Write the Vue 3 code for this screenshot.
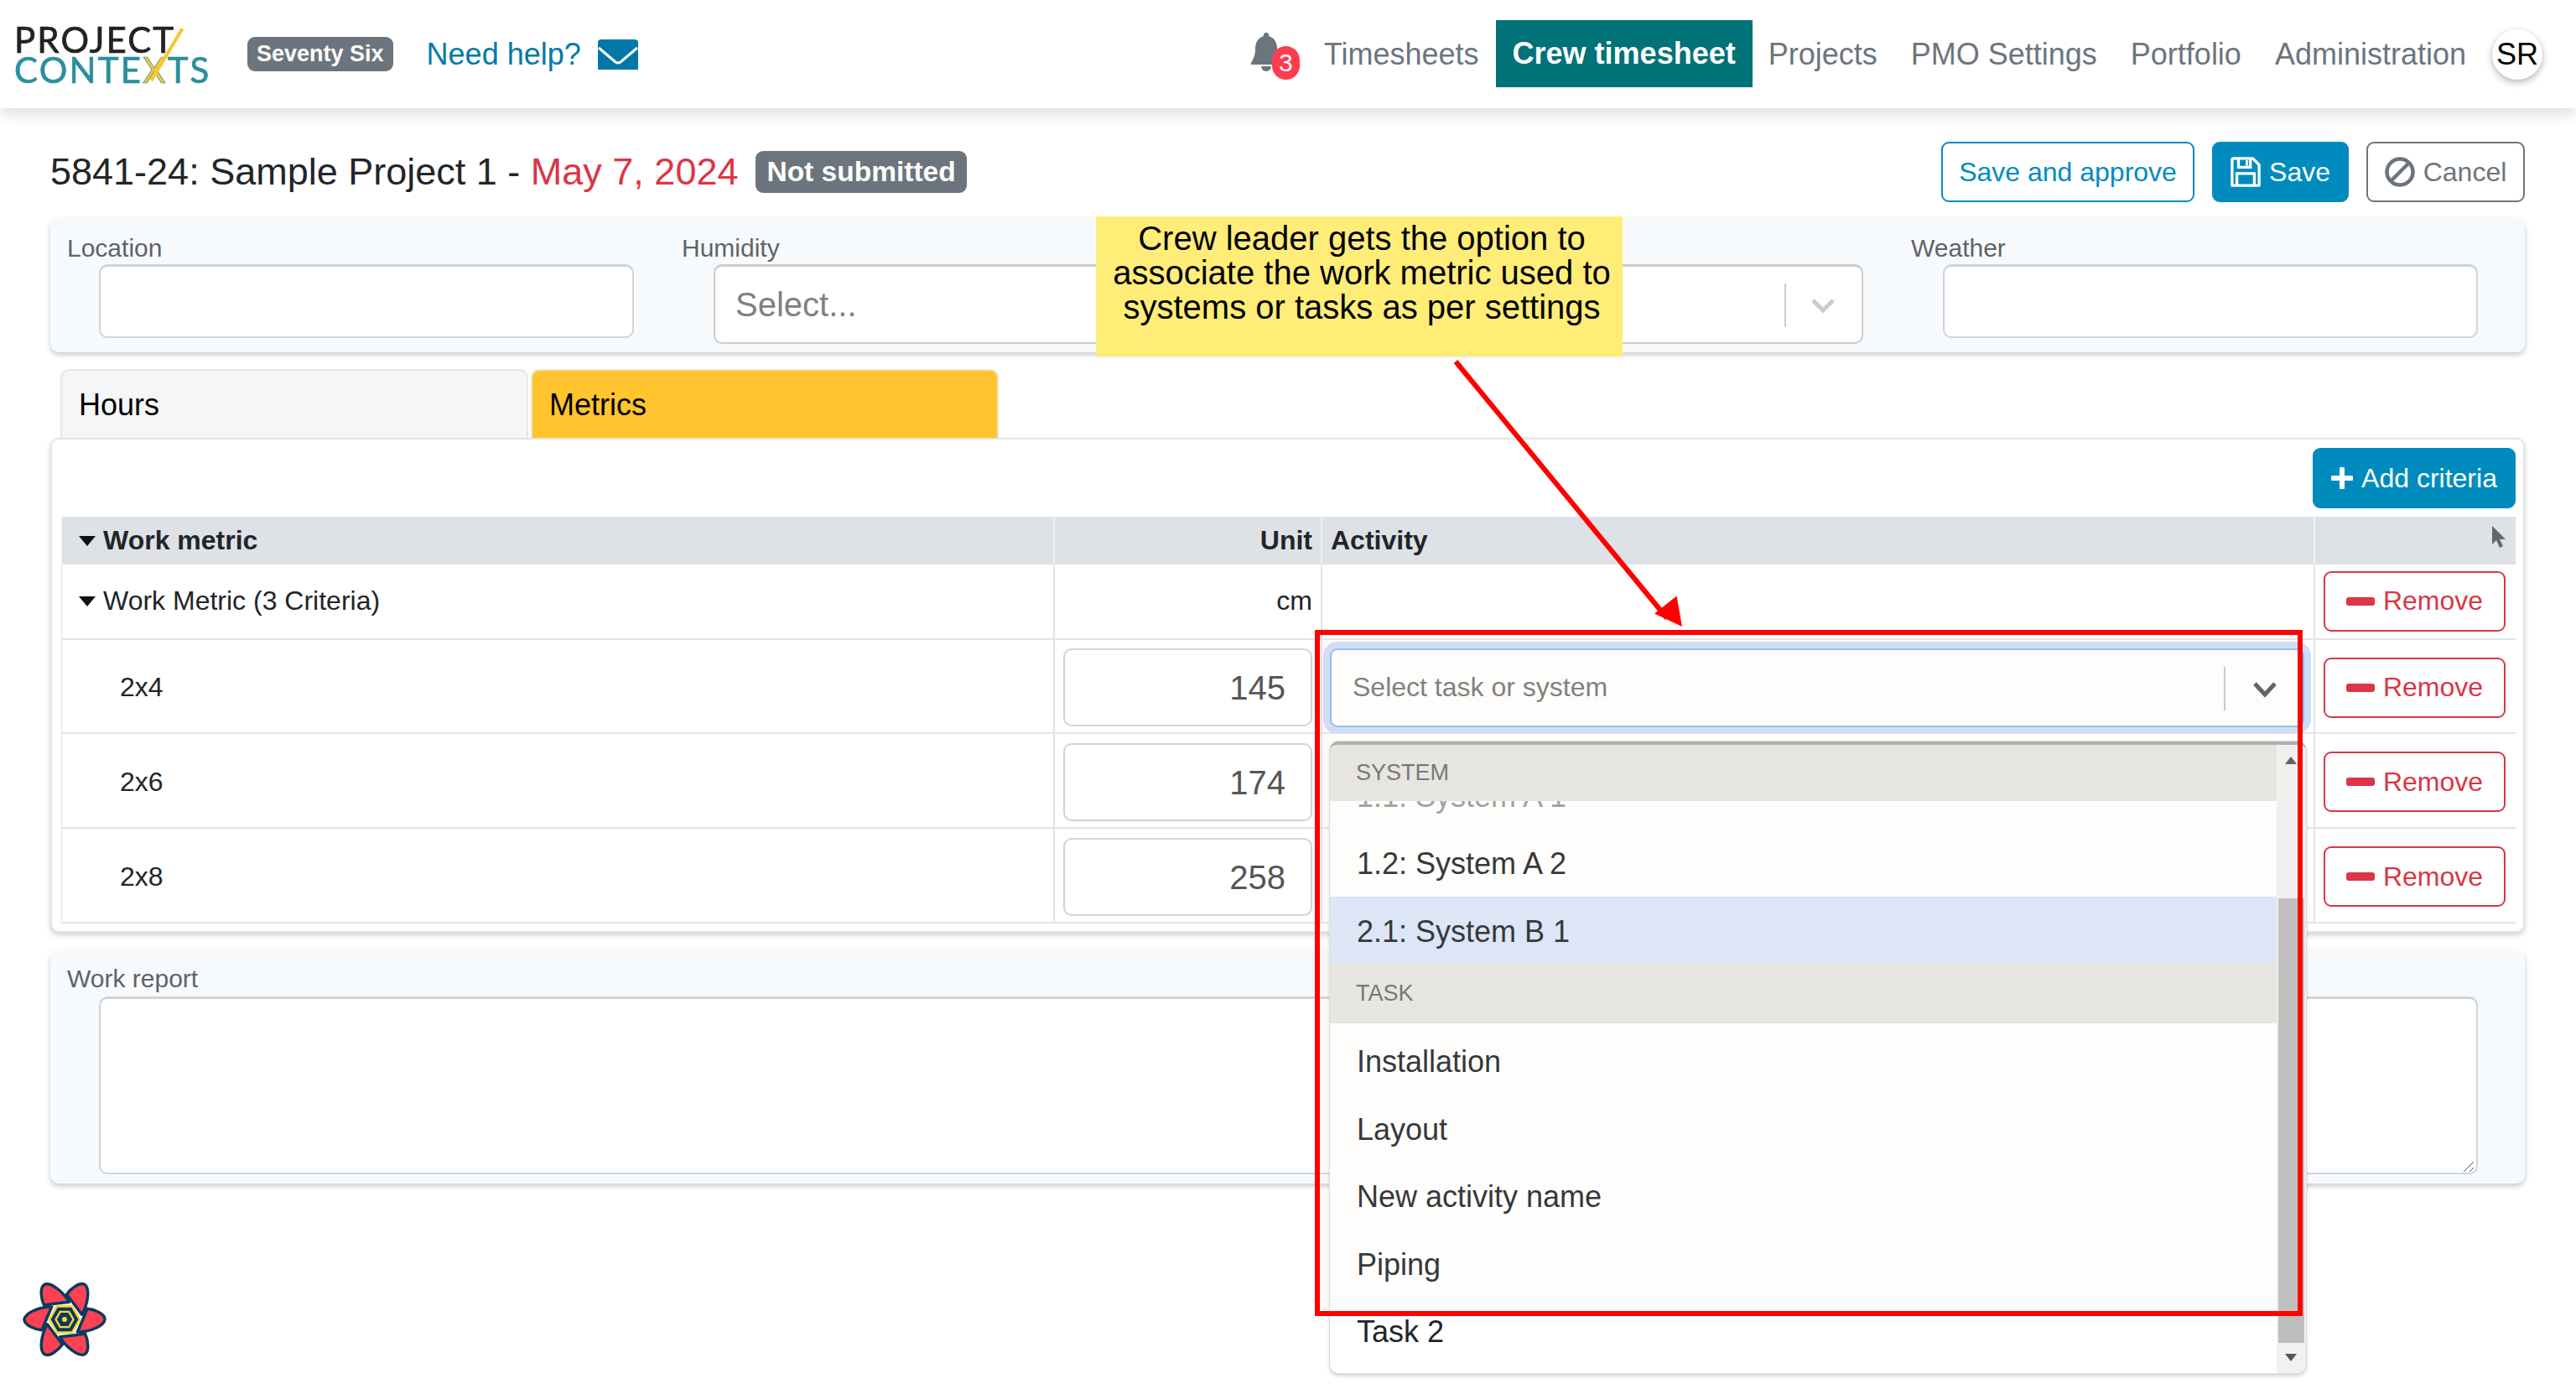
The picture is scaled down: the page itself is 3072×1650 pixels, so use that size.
<script setup>
const navItems = [
  { label: 'Timesheets' },
  { label: 'Crew timesheet', active: true },
  { label: 'Projects' },
  { label: 'PMO Settings' },
  { label: 'Portfolio' },
  { label: 'Administration' },
]
const rows = [
  { name: '2x4', value: 145, cls: 'row-a', select: true },
  { name: '2x6', value: 174, cls: 'row-b' },
  { name: '2x8', value: 258, cls: 'row-b' },
]
const petals = [0, 60, 120, 180, 240, 300]
const hexOuter = '32,50 41,34.4 59,34.4 68,50 59,65.6 41,65.6'
const hexMid = '39.5,50 44.75,40.9 55.25,40.9 60.5,50 55.25,59.1 44.75,59.1'
</script>

<template>
  <div class="page">
    <header class="nav">
      <div class="logo">
        <div class="logo-top">PROJECT</div>
        <div class="logo-bottom">CONTE<span class="logo-x">X</span>TS</div>
        <span class="logo-slash"></span>
      </div>
      <span class="org-badge">Seventy Six</span>
      <a class="help">Need help?</a>
      <svg class="mail" viewBox="0 0 48 36">
        <path d="M4 0h40a4 4 0 0 1 4 4v32H0V4a4 4 0 0 1 4-4z" fill="#0079a8" />
        <path d="M1 10l20 17q3 2 6 0L47 10" fill="none" stroke="#fff" stroke-width="3" />
      </svg>
      <div class="nav-right">
        <div class="bell">
          <svg viewBox="0 0 36 50" class="bell-icon">
            <path d="M18 0a3 3 0 0 1 3 4c7 2 10 8 10 15 0 9 3 13 5 17v2H0v-2c2-4 5-8 5-17 0-7 3-13 10-15a3 3 0 0 1 3-4z" fill="#6c757d" />
            <path d="M12 40a6 6 0 0 0 12 0z" fill="#6c757d" />
          </svg>
          <span class="bell-count">3</span>
        </div>
        <a v-for="item in navItems" :key="item.label" class="nav-link" :class="{ active: item.active }">{{ item.label }}</a>
        <span class="avatar">SR</span>
      </div>
    </header>

    <main class="main">
      <div class="title-row">
        <h1 class="title">5841-24: Sample Project 1 - <span class="date">May 7, 2024</span></h1>
        <span class="status">Not submitted</span>
        <div class="actions">
          <button class="btn btn-outline">Save and approve</button>
          <button class="btn btn-primary">
            <svg viewBox="0 0 38 38" class="btn-icon">
              <path d="M3 2h25l8 8v26H2V3z" fill="none" stroke="#fff" stroke-width="3.5" stroke-linejoin="round" />
              <path d="M10 3v10h15V3M8 36V21h22v15" fill="none" stroke="#fff" stroke-width="3.5" />
              <rect x="19" y="4" width="3" height="7" fill="#fff" />
            </svg>
            Save
          </button>
          <button class="btn btn-cancel">
            <svg viewBox="0 0 36 36" class="btn-icon">
              <circle cx="18" cy="18" r="15.5" fill="none" stroke="#6c757d" stroke-width="4.5" />
              <path d="M7 29L29 7" stroke="#6c757d" stroke-width="4.5" />
            </svg>
            Cancel
          </button>
        </div>
      </div>

      <section class="card filters">
        <div class="field">
          <label class="label">Location</label>
          <div class="input"></div>
        </div>
        <div class="field">
          <label class="label">Humidity</label>
          <div class="input select-box"><span class="select-ph">Select...</span></div>
        </div>
        <div class="field">
          <label class="label">&nbsp;</label>
          <div class="input select-box">
            <span class="select-sep"></span>
            <svg viewBox="0 0 30 18" class="select-chev"><path d="M3 3l12 12L27 3" fill="none" stroke="#ccc" stroke-width="5" /></svg>
          </div>
        </div>
        <div class="field">
          <label class="label">Weather</label>
          <div class="input"></div>
        </div>
      </section>

      <div class="tabs">
        <div class="tab">Hours</div>
        <div class="tab tab-active">Metrics</div>
      </div>

      <section class="metrics">
        <div class="metrics-bar">
          <button class="btn btn-primary btn-add">
            <svg viewBox="0 0 26 26" class="plus"><path d="M13 2v22M2 13h22" stroke="#fff" stroke-width="6" stroke-linecap="round" /></svg>
            Add criteria
          </button>
        </div>
        <div class="table">
          <div class="tr thead">
            <div class="td c1"><span class="caret"></span>Work metric</div>
            <div class="td c2">Unit</div>
            <div class="td c3">Activity</div>
            <div class="td c4 cursor-cell">
              <svg viewBox="0 0 16 26" class="cursor"><path d="M0 0l16 16H9l4 8-4 2-4-9-5 5z" fill="#666" /></svg>
            </div>
          </div>
          <div class="tr row-group">
            <div class="td c1"><span class="caret"></span>Work Metric (3 Criteria)</div>
            <div class="td c2">cm</div>
            <div class="td c3"></div>
            <div class="td c4"><button class="btn-remove"><span class="minus"></span>Remove</button></div>
          </div>
          <div v-for="row in rows" :key="row.name" class="tr body-row" :class="row.cls">
            <div class="td c1 name">{{ row.name }}</div>
            <div class="td c2 unit-cell"><div class="num">{{ row.value }}</div></div>
            <div class="td c3 activity-cell">
              <div v-if="row.select" class="task-select">
                <span class="task-ph">Select task or system</span>
                <span class="task-sep"></span>
                <svg viewBox="0 0 30 20" class="task-chev"><path d="M3 3l12 13L27 3" fill="none" stroke="#555" stroke-width="5" /></svg>
                <div class="menu">
                  <div class="menu-group first">SYSTEM</div>
                  <div class="menu-item clipped">1.1: System A 1</div>
                  <div class="menu-item">1.2: System A 2</div>
                  <div class="menu-item selected">2.1: System B 1</div>
                  <div class="menu-group task">TASK</div>
                  <div class="menu-item">Installation</div>
                  <div class="menu-item">Layout</div>
                  <div class="menu-item">New activity name</div>
                  <div class="menu-item">Piping</div>
                  <div class="menu-item">Task 2</div>
                  <div class="scroll">
                    <span class="arrow-up"></span>
                    <span class="thumb"></span>
                    <span class="arrow-down"></span>
                  </div>
                </div>
              </div>
            </div>
            <div class="td c4"><button class="btn-remove"><span class="minus"></span>Remove</button></div>
          </div>
        </div>
      </section>

      <section class="card report">
        <label class="label">Work report</label>
        <div class="textarea">
          <svg viewBox="0 0 14 14" class="grip"><path d="M1 14L13 2M8 14l5-5" stroke="#555" stroke-width="1" /></svg>
        </div>
      </section>
    </main>

    <div class="note">Crew leader gets the option to associate the work metric used to systems or tasks as per settings</div>
    <svg class="arrow" viewBox="0 0 320 340">
      <path d="M6 6L258 312" stroke="#f00" stroke-width="6" />
      <polygon points="276,322 269.500,285.500 243,306.500" fill="#f00" />
    </svg>
    <div class="red-box"></div>

    <svg class="devtools" viewBox="0 0 100 90">
      <g transform="translate(50 45)">
        <path
          v-for="a in petals"
          :key="a"
          :transform="`rotate(${a})`"
          d="M-15.300 -15C-30 -15 -47 -8 -48 0C-48 7 -35 12 -27 12.700Q-22 0 -15.300 -15Z"
          fill="#ff4154"
          stroke="#0b3a5b"
          stroke-width="3.500"
          stroke-linejoin="round"
        />
      </g>
      <polygon :points="hexOuter" fill="#0b3a5b" stroke="#ffd43b" stroke-width="2.600" transform="translate(0 -5)" />
      <polygon :points="hexMid" fill="#0b3a5b" stroke="#ffd43b" stroke-width="2.400" transform="translate(0 -5)" />
      <circle cx="50" cy="45" r="3" fill="#ffd43b" />
    </svg>
  </div>
</template>

<style>
html, body { margin: 0; background: #fff; overflow: hidden; }
</style>

<style scoped>
.page {
  position: relative;
  width: 3072px;
  height: 1650px;
  overflow: hidden;
  background: #fff;
  font-family: "Liberation Sans", Arial, sans-serif;
  color: #212529;
}
button { font-family: inherit; }

.nav {
  height: 129px;
  display: flex;
  align-items: center;
  background: #fff;
  box-shadow: 0 5px 18px rgba(0, 0, 0, .16);
  padding-left: 17px;
  box-sizing: border-box;
}
.logo {
  position: relative;
  width: 233px;
  margin-right: 45px;
  font-family: Lato, sans-serif;
  filter: blur(.7px);
  line-height: 36px;
  margin-top: 0;
}
.logo-top { font-size: 42px; color: #222; letter-spacing: 2.100px; font-weight: 400; -webkit-text-stroke: .7px #222; }
.logo-bottom { font-size: 42px; color: #2b8f9d; letter-spacing: 2.200px; font-weight: 400; -webkit-text-stroke: .7px #2b8f9d; }
.logo-x { color: #fbc531; }
.logo-slash {
  position: absolute;
  left: 180px;
  top: 0;
  width: 4px;
  height: 72px;
  background: #fbc531;
  transform: rotate(31deg);
}
.org-badge {
  background: #6c757d;
  color: #fff;
  font-weight: 700;
  font-size: 27px;
  line-height: 41px;
  padding: 0 11px;
  border-radius: 9px;
  margin-right: 40px;
}
.help { color: #0079a8; font-size: 36px; margin-right: 20px; }
.mail { width: 48px; height: 36px; }
.nav-right { margin-left: auto; display: flex; align-items: center; padding-right: 40px; }
.bell { position: relative; width: 60px; height: 60px; margin-right: 9px; margin-top: 8px; }
.bell-icon { position: absolute; left: 2px; top: 0; width: 36px; height: 50px; }
.bell-count {
  position: absolute;
  left: 27px;
  top: 16px;
  width: 33px;
  height: 40px;
  border-radius: 17px;
  background: #ff3b50;
  color: #fff;
  font-size: 30px;
  line-height: 40px;
  text-align: center;
}
.nav-link { color: #6c757d; font-size: 36px; padding: 0 20px; line-height: 80px; }
.nav-link.active { background: #017277; color: #fff; font-weight: 700; margin: -2px -1px 0 0; }
.avatar {
  width: 60px;
  height: 60px;
  margin-left: 11px;
  border-radius: 50%;
  background: #fff;
  color: #000;
  font-size: 36px;
  line-height: 60px;
  text-align: center;
  box-shadow: 0 3px 8px rgba(0, 0, 0, .3);
}

.main { padding: 40px 61px 0 60px; }
.title-row { display: flex; align-items: center; height: 72px; margin-bottom: 20px; }
.title { margin: 0; font-size: 45px; font-weight: 400; color: #212529; }
.date { color: #dc3545; }
.status {
  margin-left: 21px;
  background: #6c757d;
  color: #fff;
  font-size: 33.500px;
  font-weight: 700;
  line-height: 50px;
  padding: 0 13px;
  border-radius: 9px;
}
.actions { margin-left: auto; display: flex; gap: 21px; }
.btn {
  height: 72px;
  border-radius: 9px;
  font-size: 32px;
  padding: 0;
  display: flex;
  align-items: center;
  justify-content: center;
  box-sizing: border-box;
  background: #fff;
  white-space: nowrap;
}
.btn-outline { border: 2px solid #008bbf; color: #008bbf; width: 302px; }
.btn-primary { border: 2px solid #008bbf; background: #008bbf; color: #fff; gap: 10px; width: 163px; }
.btn-cancel { border: 2px solid #6c757d; color: #6c757d; gap: 10px; width: 189px; }
.btn-icon { width: 36px; height: 38px; }

.card {
  background: #f7fafd;
  border-radius: 10px;
  box-shadow: 0 3px 6px rgba(0, 0, 0, .22);
  box-sizing: border-box;
}
.filters {
  height: 159px;
  display: grid;
  grid-template-columns: repeat(4, 733px);
  padding: 15px 0 0 20px;
}
.label { display: block; color: #5f6368; font-size: 30px; line-height: 39px; }
.input {
  width: 638px;
  height: 88px;
  margin-left: 38px;
  background: #fff;
  border: 2px solid #ced4da;
  border-top-width: 3px;
  border-radius: 10px;
  box-sizing: border-box;
}
.select-box {
  height: 95px;
  position: relative;
  display: flex;
  align-items: center;
  border-color: #cccccc;
}
.select-ph { color: #808080; font-size: 40px; margin-left: 24px; }
.select-sep { position: absolute; right: 90px; top: 20px; height: 52px; width: 2px; background: #ccc; }
.select-chev { position: absolute; right: 31px; top: 37px; width: 30px; height: 18px; }

.tabs { display: flex; gap: 3px; margin: 20px 0 0 12px; height: 82px; }
.tab {
  width: 558px;
  box-sizing: border-box;
  padding-left: 20px;
  line-height: 82px;
  font-size: 36px;
  color: #000;
  background: #f5f6f8;
  border: 2px solid #e6e6e6;
  border-bottom: 0;
  border-radius: 10px 10px 0 0;
}
.tab-active { background: #ffc42e; border-color: #f0e6c8; }

.metrics {
  height: 590px;
  box-sizing: border-box;
  background: #fff;
  border: 2px solid #e4e4e4;
  border-radius: 10px;
  box-shadow: 0 3px 6px rgba(0, 0, 0, .18);
  padding: 10px 9px 0 11px;
}
.metrics-bar { display: flex; justify-content: flex-end; height: 82px; }
.btn-add { width: 242px; gap: 10px; padding: 0; }
.plus { width: 26px; height: 26px; }
.table { width: 2927px; }
.tr {
  display: grid;
  grid-template-columns: 1183px 319px 1184px 241px;
  font-size: 32px;
  border-bottom: 2px solid #e2e4e8;
  box-sizing: border-box;
}
.thead { height: 57px; background: #dee1e6; font-weight: 700; border-bottom: 0; }
.row-group { height: 90px; }
.row-a { height: 112px; }
.row-b { height: 113px; }
.td {
  display: flex;
  align-items: center;
  box-sizing: border-box;
  border-left: 2px solid #e2e4e8;
  min-width: 0;
}
.row-group .td { padding-bottom: 1px; }
.body-row .td { padding-top: 3px; }
.thead .td { border-left-color: #eef0f2; }
.c1 { padding-left: 20px; border-left-width: 1px; }
.c2 { justify-content: flex-end; padding-right: 10px; }
.c3 { padding-left: 10px; }
.c4 { justify-content: flex-start; padding-left: 10px; }
.thead .cursor-cell { justify-content: flex-end; padding-right: 12px; align-items: flex-start; padding-top: 11px; }
.cursor { width: 16px; height: 26px; }
.caret {
  width: 0;
  height: 0;
  border-left: 10px solid transparent;
  border-right: 10px solid transparent;
  border-top: 12px solid #111;
  margin-right: 9px;
}
.body-row .name { padding-left: 69px; }
.num {
  width: 297px;
  height: 93px;
  box-sizing: border-box;
  border: 2px solid #ced4da;
  border-radius: 10px;
  color: #555;
  font-size: 40px;
  line-height: 90px;
  text-align: right;
  padding-right: 30px;
}
.btn-remove {
  width: 217px;
  height: 72px;
  box-sizing: border-box;
  background: #fff;
  border: 2px solid #dc3545;
  border-radius: 9px;
  color: #dc3545;
  font-size: 32px;
  display: flex;
  align-items: center;
  justify-content: center;
  gap: 10px;
  padding: 0;
}
.minus { width: 34px; height: 10px; border-radius: 3px; background: #dc3545; }

.activity-cell { padding-left: 9px; }
.task-select {
  position: relative;
  width: 1162px;
  height: 94px;
  box-sizing: border-box;
  background: #fff;
  border: 2px solid #80bdff;
  border-radius: 9px;
  box-shadow: 0 0 0 8px #cfdcf8;
  display: flex;
  align-items: center;
  font-weight: 400;
}
.task-ph { margin-left: 25px; color: #757575; font-size: 32px; }
.task-sep { position: absolute; right: 92px; top: 20px; height: 52px; width: 2px; background: #c6c6c6; }
.task-chev { position: absolute; right: 30px; top: 37px; width: 30px; height: 20px; }

.menu {
  position: absolute;
  left: -2px;
  top: 109px;
  width: 1164px;
  height: 753px;
  box-sizing: border-box;
  background: #fff;
  border-radius: 10px;
  border-top: 4px solid #aaa;
  box-shadow: 0 0 0 1px #ddd, 0 3px 5px rgba(0, 0, 0, .2);
  overflow: hidden;
  z-index: 5;
}
.menu-group {
  position: relative;
  width: 1129px;
  height: 71px;
  box-sizing: border-box;
  padding-left: 31px;
  background: #e6e5e3;
  color: #6b6b6b;
  font-size: 27px;
  line-height: 71px;
}
.menu-group.first { height: 67px; line-height: 67px; z-index: 2; }
.menu-group.task { margin-bottom: 4px; }
.menu-item {
  width: 1129px;
  height: 80.500px;
  box-sizing: border-box;
  padding-left: 32px;
  color: #212529;
  font-size: 36px;
  line-height: 84px;
}
.menu-item.clipped { margin-top: -47px; color: #9a9a9a; }
.menu-item.selected { background: #dbe6fa; }
.scroll {
  position: absolute;
  right: 0;
  top: 0;
  bottom: 0;
  width: 35px;
  background: #f1f1f1;
}
.thumb {
  position: absolute;
  left: 2px;
  right: 2px;
  top: 183px;
  height: 530px;
  background: #bdbdbd;
}
.arrow-up, .arrow-down {
  position: absolute;
  left: 10px;
  width: 0;
  height: 0;
  border-left: 7px solid transparent;
  border-right: 7px solid transparent;
}
.arrow-up { top: 14px; border-bottom: 9px solid #555; }
.arrow-down { bottom: 14px; border-top: 9px solid #555; }

.report {
  position: relative;
  height: 278px;
  margin-top: 21px;
  padding: 14px 0 0 20px;
}
.textarea {
  position: absolute;
  left: 58px;
  top: 55px;
  width: 2837px;
  height: 212px;
  box-sizing: border-box;
  background: #fff;
  border: 2px solid #ced4da;
  border-top-width: 3px;
  border-radius: 10px;
}
.grip { position: absolute; right: 2px; bottom: 1px; width: 14px; height: 14px; }

.note {
  position: absolute;
  left: 1307px;
  top: 258px;
  width: 628px;
  height: 167px;
  box-sizing: border-box;
  padding: 6px 9px 0 15px;
  background: #ffed78;
  color: #000;
  font-size: 40px;
  line-height: 41px;
  text-align: center;
  z-index: 8;
}
.arrow {
  position: absolute;
  left: 1730px;
  top: 425px;
  width: 320px;
  height: 340px;
  z-index: 9;
}
.red-box {
  position: absolute;
  left: 1568px;
  top: 751px;
  width: 1178px;
  height: 818px;
  box-sizing: border-box;
  border: 6px solid #f00;
  background: rgba(250, 240, 220, .1);
  z-index: 9;
}
.devtools {
  position: absolute;
  left: 27px;
  top: 1528px;
  width: 100px;
  height: 90px;
}
</style>
